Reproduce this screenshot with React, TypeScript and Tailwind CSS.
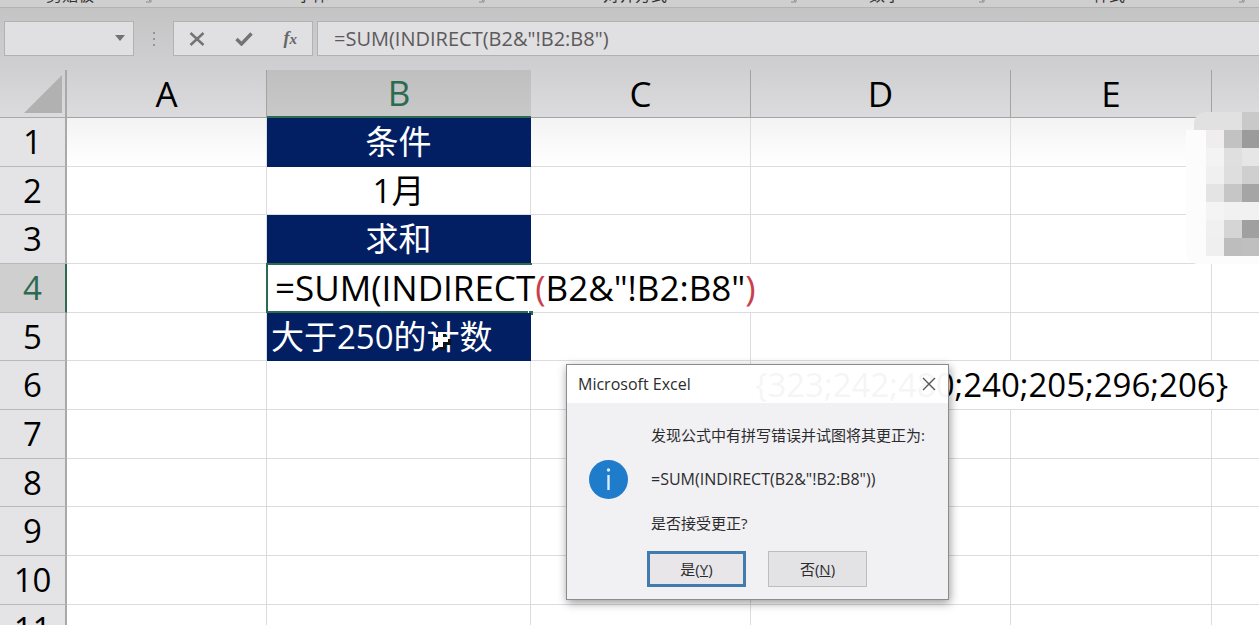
import { useState } from "react";

type RowData = {
  id: number;
  height: string;
};

// the sheet is zoomed, so every third row comes out one pixel shorter
const rows: RowData[] = [
  { id: 1, height: "h-[49px]" },
  { id: 2, height: "h-[48px]" },
  { id: 3, height: "h-[49px]" },
  { id: 4, height: "h-[49px]" },
  { id: 5, height: "h-[48px]" },
  { id: 6, height: "h-[49px]" },
  { id: 7, height: "h-[49px]" },
  { id: 8, height: "h-[48px]" },
  { id: 9, height: "h-[49px]" },
  { id: 10, height: "h-[49px]" },
  { id: 11, height: "h-[48px]" },
];

const columns = ["A", "B", "C", "D", "E", "F"];

const mosaic = [
  "bg-[#e1e1e1]", "bg-[#e1e1e1]", "bg-[#c9c9c9]",
  "bg-[#efedee]", "bg-[#c3c2c3]", "bg-[#9b9b9b]",
  "bg-[#f3f3f3]", "bg-[#dfdfdf]", "bg-[#e6e6e6]",
  "bg-[#f1f0f1]", "bg-[#dededf]", "bg-[#cfcfcf]",
  "bg-[#e5e4e5]", "bg-[#c6c6c7]", "bg-[#a5a5a5]",
  "bg-[#f4f4f4]", "bg-[#f1f1f1]", "bg-[#f1f1f1]",
  "bg-[#f0f0f0]", "bg-[#d5d5d5]", "bg-[#a0a0a0]",
  "bg-[#efefef]", "bg-[#bebdbe]", "bg-[#bfbfbf]",
];

const cell = "border-r border-b border-[#dcdcdc] p-0 whitespace-nowrap last:border-r-0";
const filled = "border-b border-r border-[#021f63] bg-[#021f63] p-0 text-white whitespace-nowrap";

const Launcher = () => (
  <svg width="12" height="12" viewBox="0 0 12 12" fill="none" stroke="#8b8b8b">
    <path d="M1 8V1h7M5 5l5 5M11 6v5H6" />
  </svg>
);

const RibbonGroup = ({ label, width }: { label: string; width: string }) => (
  <div className={`flex shrink-0 items-end ${width}`}>
    <span className="flex-1 text-center">{label}</span>
    <span className="mb-1"><Launcher /></span>
  </div>
);

const Ribbon = () => (
  <div className="flex h-2 shrink-0 items-end overflow-hidden border-b border-[#b3b3b4] bg-[#cfcfd0] text-[16px] leading-[24px] text-[#333]">
    <RibbonGroup label="剪贴板" width="w-[152px]" />
    <RibbonGroup label="字体" width="w-[333px]" />
    <RibbonGroup label="对齐方式" width="w-[312px]" />
    <RibbonGroup label="数字" width="w-[188px]" />
    <RibbonGroup label="样式" width="w-[260px]" />
  </div>
);

const FormulaBar = () => {
  const [formula, setFormula] = useState('=SUM(INDIRECT(B2&"!B2:B8")');

  return (
    <div className="flex h-[62px] shrink-0 items-start bg-linear-to-b from-[#c4c4c5] to-[#d0d0d2] pt-[13px] pl-1">
      <div className="relative h-[35px] w-[130px] border border-[#b2b2b3] bg-[#e0dfe1]">
        <input aria-label="Name box" className="h-full w-full px-2 pr-7 text-[20px] outline-none" />
        <svg className="absolute top-[13px] right-2" width="10" height="6" viewBox="0 0 10 6">
          <path d="M0 0h10L5 6z" fill="#727272" />
        </svg>
      </div>
      <div className="flex h-[35px] w-[39px] flex-col items-center justify-center gap-1">
        <span className="size-[2px] bg-[#959595]" />
        <span className="size-[2px] bg-[#959595]" />
        <span className="size-[2px] bg-[#959595]" />
      </div>
      <div className="flex h-[35px] w-[140px] items-center justify-around border border-[#b2b2b3] bg-[#e0dfe1]">
        <button aria-label="Cancel">
          <svg width="16" height="14" viewBox="0 0 16 14" stroke="#737373" strokeWidth="2.4" fill="none">
            <path d="M1.5 1l13 12M14.5 1l-13 12" />
          </svg>
        </button>
        <button aria-label="Enter">
          <svg width="18" height="14" viewBox="0 0 18 14" stroke="#737373" strokeWidth="3.4" fill="none">
            <path d="M1.5 7l5 5L16.5 1.5" />
          </svg>
        </button>
        <button
          aria-label="Insert function"
          className="font-['Liberation_Serif',serif] text-[18px] leading-[18px] font-bold text-[#666] italic"
        >
          f<span className="text-[15px]">x</span>
        </button>
      </div>
      <input
        aria-label="Formula"
        value={formula}
        onChange={(e) => setFormula(e.target.value)}
        className="ml-1 h-[35px] min-w-0 flex-1 border-y border-l border-[#b2b2b3] bg-[#e0dfe1] pl-4 text-[20px] text-[#5c5a5c] outline-none"
      />
    </div>
  );
};

const ActiveCell = () => (
  <td colSpan={3} className="relative border-r border-b border-[#dcdcdc] bg-white p-0 pl-2 text-[35px] leading-[40px] whitespace-nowrap">
    <div className="pointer-events-none absolute -top-px -left-px h-[50px] w-[266px] border-2 border-r-0 border-[#2b6b50]" />
    <div className="absolute top-[46px] left-[261px] size-[5px] border-t border-l border-white bg-[#2b6b50]" />
    =SUM(INDIRECT<span className="text-[#c8404c]">(</span>B2&"!B2:B8"
    <span className="text-[#c8404c]">)</span>
  </td>
);

const Cursor = () => (
  <svg className="absolute top-4 left-[165px]" width="20" height="22" viewBox="0 0 20 22">
    <path d="M8 5h6v5h5v6h-5v5H8v-5H3v-6h5z" fill="#111" />
    <path d="M6 3h5v5h5v5h-5v5H6v-5H1V8h5z" fill="#fff" />
  </svg>
);

const RowCells = ({ id }: { id: number }) => {
  if (id === 1 || id === 3) {
    return (
      <>
        <td className={cell} />
        <td className={`${filled} text-center`}>{id === 1 ? "条件" : "求和"}</td>
        <td className={cell} />
        <td className={cell} />
        <td className={cell} />
        <td className={cell} />
      </>
    );
  }
  if (id === 4) {
    return (
      <>
        <td className={cell} />
        <ActiveCell />
        <td className={cell} />
        <td className={cell} />
      </>
    );
  }
  if (id === 5) {
    return (
      <>
        <td className={cell} />
        <td className={`${filled} relative pl-1`}>
          大于250的计数
          <Cursor />
        </td>
        <td className={cell} />
        <td className={cell} />
        <td className={cell} />
        <td className={cell} />
      </>
    );
  }
  if (id === 6) {
    return (
      <>
        <td className={cell} />
        <td className={cell} />
        <td className={cell} />
        <td colSpan={3} className={`${cell} pl-1`}>
          {"{323;242;480;240;205;296;206}"}
        </td>
      </>
    );
  }
  return (
    <>
      {columns.map((name) => (
        <td key={name} className={`${cell} text-center`}>
          {id === 2 && name === "B" ? "1月" : ""}
        </td>
      ))}
    </>
  );
};

const Sheet = () => (
  <table className="w-full table-fixed border-separate border-spacing-0 text-[33px] leading-[40px] text-black">
    <colgroup>
      <col className="w-[67px]" />
      <col className="w-[200px]" />
      <col className="w-[264px]" />
      <col className="w-[220px]" />
      <col className="w-[260px]" />
      <col className="w-[201px]" />
      <col />
    </colgroup>
    <thead>
      <tr className="h-[48px] bg-linear-to-b from-[#d0d0d2] to-[#dcdcde] text-[35px]">
        <th className="border-r-2 border-b border-[#a9a9aa] p-0">
          <svg className="ml-6" width="38" height="38" viewBox="0 0 38 38">
            <path d="M38 0v38H0z" fill="#b1b1b2" />
          </svg>
        </th>
        {columns.map((name) => (
          <th
            key={name}
            className={
              name === "B"
                ? "border-b-2 border-[#2b6b50] bg-linear-to-b from-[#bfbfc0] to-[#c8c8c9] p-0 font-normal text-[#2b6b50]"
                : "border-r border-b border-[#a3a3a4] p-0 font-normal last:border-r-0"
            }
          >
            {name === "F" ? "" : name}
          </th>
        ))}
      </tr>
    </thead>
    <tbody>
      {rows.map((row) => (
        <tr key={row.id} className={`${row.height} ${row.id === 1 ? "bg-linear-to-b from-[#f3f3f3] to-white" : ""}`}>
          <th
            className={
              row.id === 4
                ? "border-r-2 border-b border-r-[#2b6b50] border-b-[#b9b9ba] bg-[#cfcfd0] p-0 font-normal text-[#2b6b50]"
                : "border-r-2 border-b border-r-[#a9a9aa] border-b-[#b9b9ba] bg-[#e4e3e6] p-0 font-normal"
            }
          >
            {row.id}
          </th>
          <RowCells id={row.id} />
        </tr>
      ))}
    </tbody>
  </table>
);

const Mosaic = () => (
  <div className="absolute top-[112px] right-0 flex">
    <div className="flex w-5 flex-col items-end">
      <div className="h-[18px] w-3 rounded-tl-full bg-[#e1e1e1]" />
      <div className="h-[134px] w-full rounded-bl-xl bg-[#fcfcfc]" />
    </div>
    <div className="grid w-[53px] auto-rows-[18px] grid-cols-[18px_18px_17px] border-b-8 border-[#fcfcfc]">
      {mosaic.map((color, i) => (
        <div key={i} className={color} />
      ))}
    </div>
  </div>
);

const Dialog = ({ onClose }: { onClose: () => void }) => (
  <div
    role="dialog"
    aria-labelledby="dialog-title"
    className="absolute top-[364px] left-[566px] w-[383px] border border-[#8c8c8e] text-[15px] leading-[22px] text-[#2c2c2e] shadow-[1px_3px_9px_rgba(0,0,0,0.4)]"
  >
    <div className="flex h-[38px] items-center justify-between bg-white/96 pr-3 pl-[11px]">
      <h2 id="dialog-title" className="text-[16px]">Microsoft Excel</h2>
      <button aria-label="Close" onClick={onClose}>
        <svg width="14" height="14" viewBox="0 0 14 14" stroke="#555" strokeWidth="1.4">
          <path d="M1 1l12 12M13 1L1 13" />
        </svg>
      </button>
    </div>
    <div className="bg-[#f1f0f3] pt-[21px] pb-3">
      <div className="flex items-center gap-[23px] pl-[22px]">
        <svg width="39" height="39" viewBox="0 0 39 39">
          <circle cx="19.5" cy="19.5" r="19.5" fill="#1f7ccb" />
          <path d="M19.5 15v15" stroke="#d9ecfb" strokeWidth="2.4" />
          <circle cx="19.5" cy="10" r="1.7" fill="#d9ecfb" />
        </svg>
        <div className="flex flex-col gap-[22px] whitespace-nowrap">
          <p>发现公式中有拼写错误并试图将其更正为:</p>
          <p className="text-[16px]">=SUM(INDIRECT(B2&"!B2:B8"))</p>
          <p>是否接受更正?</p>
        </div>
      </div>
      <div className="mt-[17px] flex gap-[22px] pl-20">
        <button onClick={onClose} className="h-9 w-[99px] border-3 border-[#427bae] bg-[#e9e6ea]">
          是(<u>Y</u>)
        </button>
        <button onClick={onClose} className="h-9 w-[99px] border border-[#bdbdc0] bg-[#e3e2e5]">
          否(<u>N</u>)
        </button>
      </div>
    </div>
  </div>
);

const App = () => {
  const [open, setOpen] = useState(true);

  return (
    <div className="relative flex h-screen flex-col overflow-hidden bg-white font-['Open_Sans','Noto_Sans_CJK_SC',sans-serif]">
      <Ribbon />
      <FormulaBar />
      <Sheet />
      <Mosaic />
      {open && <Dialog onClose={() => setOpen(false)} />}
    </div>
  );
};

export default App;
